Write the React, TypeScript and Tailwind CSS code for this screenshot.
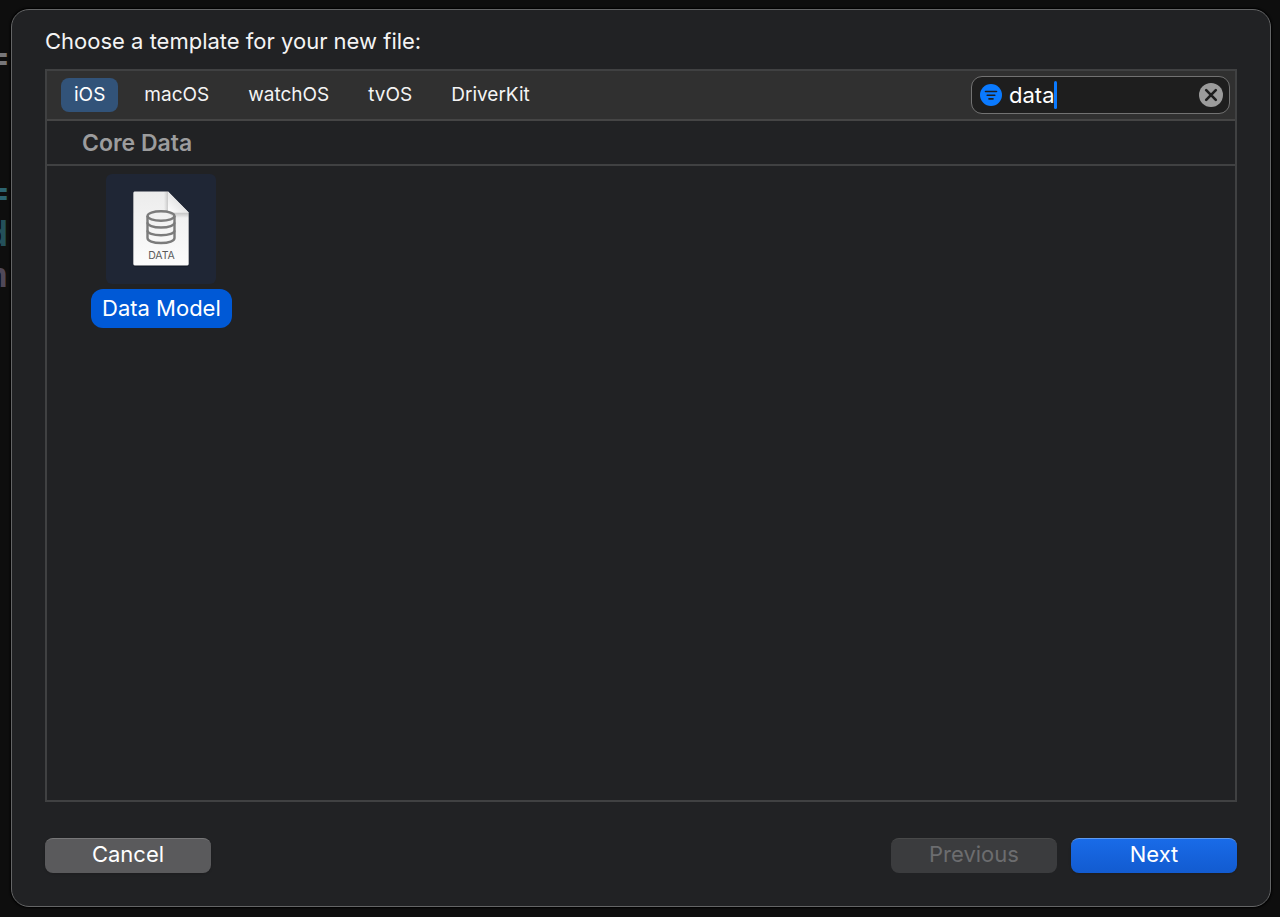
import React, { useState } from "react";
import clsx from "clsx";

const PLATFORMS = ["iOS", "macOS", "watchOS", "tvOS", "DriverKit"];

const DataModelIcon: React.FC = () => (
  <svg width="60" height="80" viewBox="0 0 60 80" aria-hidden="true">
    <defs>
      <linearGradient id="page" x1="0" y1="0" x2="0" y2="1">
        <stop offset="0" stopColor="#ececec" />
        <stop offset="0.5" stopColor="#f4f4f4" />
        <stop offset="1" stopColor="#fcfcfc" />
      </linearGradient>
      <linearGradient id="fold" x1="0" y1="1" x2="0.5" y2="0.5">
        <stop offset="0" stopColor="#ffffff" />
        <stop offset="1" stopColor="#e6e6e6" />
      </linearGradient>
      <linearGradient id="foldShade" x1="0" y1="0" x2="0" y2="1">
        <stop offset="0" stopColor="#000" stopOpacity="0.2" />
        <stop offset="1" stopColor="#000" stopOpacity="0" />
      </linearGradient>
      <linearGradient id="foldSide" x1="1" y1="0" x2="0" y2="0">
        <stop offset="0" stopColor="#000" stopOpacity="0.16" />
        <stop offset="1" stopColor="#000" stopOpacity="0" />
      </linearGradient>
    </defs>
    <path
      d="M3.5 3H37L58 24V75.5Q58 77.5 56 77.5H4Q2 77.5 2 75.5V4.5Q2 3 3.5 3Z"
      fill="#0f1420"
    />
    <path
      d="M3.5 2.5H37L57.7 23.5V75Q57.7 76.5 56 76.5H4Q2.3 76.5 2.3 75V4Q2.3 2.5 3.5 2.5Z"
      fill="url(#page)"
    />
    <path d="M37 23.5H57.7V29H43Z" fill="url(#foldShade)" />
    <path d="M33 2.5H37V23.5L33 20Z" fill="url(#foldSide)" />
    <path d="M37 2.5L57.7 23.5H39Q37 23.5 37 21.5Z" fill="url(#fold)" />
    <g fill="none" stroke="#7b7b7b" strokeWidth="2.4">
      <ellipse cx="30" cy="27" rx="13.5" ry="4.7" />
      <path d="M16.5 27V49C16.5 51.8 22 54 30 54S43.5 51.8 43.5 49V27" />
      <path d="M16.5 33.5C16.5 36.3 22 38.5 30 38.5S43.5 36.3 43.5 33.5" />
      <path d="M16.5 41.5C16.5 44.3 22 46.3 30 46.3S43.5 44.3 43.5 41.5" />
    </g>
    <text
      x="30.5"
      y="70"
      textAnchor="middle"
      fontFamily="Inter, sans-serif"
      fontSize="10.5"
      fill="#5a5a5a"
    >
      DATA
    </text>
  </svg>
);

const FilterIcon: React.FC = () => (
  <svg width="22" height="22" viewBox="0 0 22 22" aria-hidden="true">
    <circle cx="11" cy="11" r="11" fill="#0a7aff" />
    <g stroke="#1e1e1e" strokeWidth="1.6" strokeLinecap="round">
      <path d="M5.5 7.5H16.5" />
      <path d="M7.2 11.2H14.8" />
      <path d="M9 14.9H13" />
    </g>
  </svg>
);

const ClearIcon: React.FC = () => (
  <svg width="24" height="24" viewBox="0 0 24 24" aria-hidden="true">
    <circle cx="12" cy="12" r="12" fill="#9b9b9b" />
    <path
      d="M7.2 7.2L16.8 16.8M16.8 7.2L7.2 16.8"
      stroke="#1e1e1e"
      strokeWidth="2.6"
      strokeLinecap="round"
    />
  </svg>
);

// Slice of the source editor that stays visible behind the sheet
const EditorEdge: React.FC = () => (
  <div
    aria-hidden="true"
    className="absolute left-0 top-[38px] w-2 flex flex-col items-end overflow-hidden font-['DejaVu_Sans_Mono',monospace] text-[33px] leading-[41px] font-bold"
  >
    <span className="text-[#77777a]">=</span>
    <span className="mt-[94px] text-[#2c6470]">=</span>
    <span className="text-[#24505a]">d</span>
    <span className="text-[#504858]">n</span>
  </div>
);

const App: React.FC = () => {
  const [platform, setPlatform] = useState("iOS");
  const [filter, setFilter] = useState("data");

  const showDataModel = "core data model".includes(filter.toLowerCase());

  return (
    <div className="relative min-h-screen flex bg-[#0e0e0e] pt-[9px] pb-[10px] pl-[11px] pr-[9px] font-[Inter,sans-serif] text-[#f4f4f4]">
      <EditorEdge />

      <main className="relative flex-1 flex flex-col rounded-[18px] border border-[#646566] bg-[#212224] px-[33px] pt-4 pb-[33px] shadow-[0_0_2px_1px_#000]">
        <h1 className="text-[22px] leading-[30px]">
          Choose a template for your new file:
        </h1>

        <section className="mt-[13px] flex-1 flex flex-col border-2 border-[#404142]">
          <div className="flex items-center justify-between h-[50px] border-b-2 border-[#454545] bg-[#303030] pl-[14px] pr-[5px]">
            <div className="flex gap-[13px]">
              {PLATFORMS.map((name) => (
                <button
                  key={name}
                  type="button"
                  aria-pressed={platform === name}
                  onClick={() => setPlatform(name)}
                  className={clsx(
                    "h-[34px] rounded-lg px-[13px] text-[19px]",
                    platform === name && "bg-[#325379] text-white",
                  )}
                >
                  {name}
                </button>
              ))}
            </div>

            <div className="flex items-center w-[259px] h-[38px] rounded-[11px] border border-[#727272] bg-[#1e1e1e] pl-2 pr-[6px]">
              <FilterIcon />
              <input
                type="text"
                aria-label="Filter"
                value={filter}
                onChange={(e) => setFilter(e.target.value)}
                className="field-sizing-content ml-[7px] max-w-44 bg-transparent text-[22px] leading-7 text-white caret-transparent outline-none"
              />
              <span className="w-[3px] h-7 shrink-0 rounded-sm bg-[#0a7aff]" />
              <button
                type="button"
                aria-label="Clear filter"
                onClick={() => setFilter("")}
                className="ml-auto"
              >
                <ClearIcon />
              </button>
            </div>
          </div>

          {showDataModel && (
            <>
              <h2 className="h-[45px] border-b-2 border-[#404142] pl-[35px] text-[23px] leading-[44px] font-semibold text-[#9c9c9d]">
                Core Data
              </h2>
              <div className="flex px-11 pt-2">
                <button
                  type="button"
                  className="flex flex-col items-center gap-[5px]"
                >
                  <span className="flex items-center justify-center size-[110px] rounded-md bg-[#1f2635]">
                    <DataModelIcon />
                  </span>
                  <span className="h-[39px] rounded-xl bg-[#0059d6] px-[11px] text-[22px] leading-[38px] text-white">
                    Data Model
                  </span>
                </button>
              </div>
            </>
          )}
        </section>

        <footer className="mt-9 flex gap-[14px] text-[22px] leading-[30px]">
          <button
            type="button"
            className="mr-auto w-[166px] h-[35px] rounded-lg border-t border-[#777778] bg-[#5a5a5c] pb-1 text-white shadow-sm"
          >
            Cancel
          </button>
          <button
            type="button"
            disabled
            className="w-[166px] h-[35px] rounded-lg border-t border-[#484949] bg-[#3b3c3e] pb-1 text-[#6c6d6f]"
          >
            Previous
          </button>
          <button
            type="button"
            className="w-[166px] h-[35px] rounded-lg border-t border-[#5e9af0] bg-linear-to-b from-[#196be8] to-[#125bd0] pb-1 text-white shadow-sm"
          >
            Next
          </button>
        </footer>
      </main>
    </div>
  );
};

export default App;
